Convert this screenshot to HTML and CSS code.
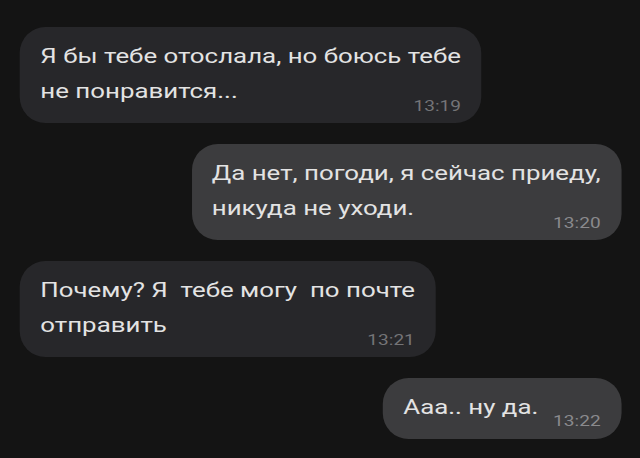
FILE: index.html
```html
<!DOCTYPE html>
<html lang="ru">
<head>
<meta charset="utf-8">
<title>Чат</title>
<link rel="stylesheet" href="styles.css">
</head>
<body>
<main class="chat">
  <div class="bubble bubble--in">
    <p class="text">Я бы тебе отослала, но боюсь тебе<br>не понравится...</p>
    <span class="time">13:19</span>
  </div>
  <div class="bubble bubble--out">
    <p class="text">Да нет, погоди, я сейчас приеду,<br>никуда не уходи.</p>
    <span class="time">13:20</span>
  </div>
  <div class="bubble bubble--in">
    <p class="text">Почему? Я  тебе могу  по почте<br>отправить</p>
    <span class="time">13:21</span>
  </div>
  <div class="bubble bubble--out bubble--row">
    <p class="text">Ааа.. ну да.</p>
    <span class="time">13:22</span>
  </div>
</main>
</body>
</html>
```

FILE: styles.css
```css
html, body {
  margin: 0;
  padding: 0;
  background: #141414;
}

body {
  width: 640px;
  height: 458px;
  overflow: hidden;
  font-family: Roboto, "Noto Sans", "DejaVu Sans", sans-serif;
}

/* The screen is rendered in a 520px column and widened to 640px */
.chat {
  box-sizing: border-box;
  width: 520px;
  display: flex;
  flex-direction: column;
  align-items: flex-start;
  gap: 21px;
  padding: 27px 15.5px 0 16.25px;
  transform: scaleX(1.2308);
  transform-origin: 0 0;
}

.bubble {
  display: grid;
  padding: 12px 16.5px 9px 16.5px;
  border-radius: 21px / 26px;
  color: #e3e3e3;
}

.bubble--in {
  background: #27272a;
}

.bubble--out {
  align-self: flex-end;
  background: #3c3c3e;
}

.text {
  margin: 0;
  font-size: 21px;
  line-height: 35px;
  white-space: pre-wrap;
}

.time {
  justify-self: end;
  margin-top: -11px;
  font-size: 15.5px;
  line-height: 16px;
  color: #747477;
}

.bubble--out .time {
  color: #8a8a8d;
}

.bubble--row {
  display: flex;
  align-items: flex-end;
  padding-bottom: 14px;
}

.bubble--row .time {
  margin: 0 0 -4px 12px;
}
```
